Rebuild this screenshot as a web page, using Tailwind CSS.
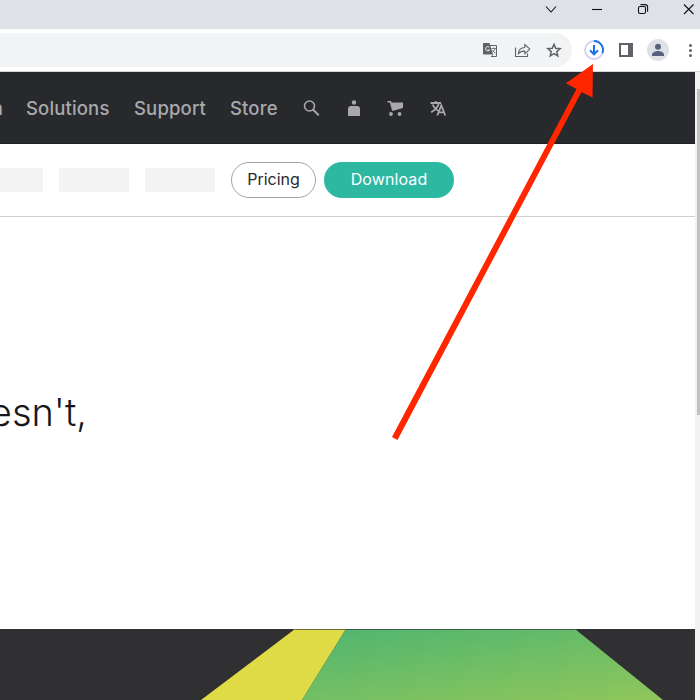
<!DOCTYPE html>
<html lang="en">
<head>
<meta charset="utf-8">
<title>Browser window</title>
<script src="https://cdn.jsdelivr.net/npm/@tailwindcss/browser@4"></script>
</head>
<body class="bg-white">
<div class="relative flex h-[700px] w-[700px] flex-col overflow-hidden bg-white font-['Inter','Liberation_Sans',sans-serif]">
  <!-- Window title bar -->
  <div class="flex h-[29px] shrink-0 justify-end bg-[#dee1e6]">
    <svg class="h-[29px] w-[170px]" viewBox="530 0 170 29" fill="none" stroke="#111" stroke-width="1.1">
      <path d="M546 6.5l5 5.5 5-5.5"/>
      <path d="M592 9.5h10"/>
      <rect x="638.5" y="6.500" width="7" height="7" rx="1.5"/>
      <path d="M640.500 4.600h4.500q2.600 0 2.600 2.600v4.500"/>
      <path d="M684 4.500l9.500 9.500M693.500 4.500l-9.500 9.500"/>
    </svg>
  </div>
  <!-- Toolbar -->
  <div class="flex h-[43px] shrink-0 items-start border-b border-[#d5d6d8] bg-white pt-1">
    <div class="flex h-[34px] w-[572px] justify-end rounded-r-full bg-[#f1f3f4]">
      <svg class="h-[34px] w-[102px]" viewBox="470 33 102 34" fill="none" stroke="#5f6368" stroke-width="1.300">
        <path d="M490 45.500h6.500v11H491" stroke-width="1"/>
        <path d="M483 43h6.500l3.500 11.500h-9q-1 0-1-1z" fill="#5f6368" stroke="none"/>
        <path d="M489.200 47.200a2.100 2.100 0 1 0 .3 2.800h-1.700" stroke="#f1f3f4" stroke-width="1"/>
        <path d="M491.500 48.500h4.500M493.800 47.500v1M495.200 48.500q-.8 2.500-3 4M492.500 50q1 2 3.200 3.300M491.500 56.500l1.500-2" stroke-width=".8"/>
        <path d="M515.500 47.500v9h12v-3" stroke-width="1.100"/>
        <path d="M518.300 53.800q.6-6.200 6.500-6.300v-3.200l5 4.800-5 4.800v-2.800q-4.300-.2-6.500 2.700z" stroke-width="1.100" stroke-linejoin="round"/>
        <path d="M554 44.300l1.700 4 4.400.4-3.300 2.900 1 4.300-3.800-2.300-3.800 2.300 1-4.300-3.300-2.900 4.400-.4z" stroke-width="1.500"/>
      </svg>
    </div>
    <svg class="h-[34px] w-[128px]" viewBox="572 33 128 34" fill="none">
      <circle cx="594" cy="50" r="9" stroke="#d0cff7" stroke-width="1.800"/>
      <path d="M594 41a9 9 0 0 1 8.400 12.200" stroke="#1a73e8" stroke-width="1.900"/>
      <path d="M594 45v9M590 50.300l4 4 4-4" stroke="#1a73e8" stroke-width="2"/>
      <rect x="620" y="44" width="12" height="12" stroke="#5f6368" stroke-width="2"/>
      <path d="M628 43h5v14h-5z" fill="#5f6368"/>
      <circle cx="658" cy="50" r="11" fill="#dee1e6"/>
      <circle cx="658" cy="46.800" r="3" fill="#56627a"/>
      <path d="M652 56v-1.500c0-2.300 3.500-3.500 6-3.500s6 1.200 6 3.500V56z" fill="#56627a"/>
      <g fill="#5f6368"><circle cx="690.500" cy="45.500" r="1.500"/><circle cx="690.500" cy="50.500" r="1.500"/><circle cx="690.500" cy="55.500" r="1.500"/></g>
    </svg>
  </div>
  <!-- Viewport -->
  <div class="flex min-h-0 flex-1">
    <main class="flex w-[695px] flex-col overflow-hidden">
      <nav class="flex h-[72px] shrink-0 items-center border-b border-[#201f25] bg-[#28292d] text-[18.5px] font-medium whitespace-nowrap text-[#a9a9ab]">
        <span class="flex w-[26px] shrink-0 pt-[2px]"><span class="flex w-[3px] justify-end overflow-hidden">n</span></span>
        <a class="w-[108px] pt-[2px] tracking-[0.15px]">Solutions</a>
        <a class="w-[96px] pt-[2px] tracking-[0.15px]">Support</a>
        <a class="w-[66px] pt-[2px] tracking-[0.15px]">Store</a>
        <svg class="h-[24px] w-[154px]" viewBox="296 96 154 24" fill="none" stroke="#a9a9ab">
          <circle cx="309.500" cy="106" r="5" stroke-width="1.600"/><path d="M313.200 109.800l5.600 5.600" stroke-width="2"/>
          <g fill="#a9a9ab" stroke="none">
            <circle cx="354" cy="102.500" r="2.200"/>
            <path d="M348 116v-7q0-3 3-3h6q3 0 3 3v7z"/>
            <path d="M391 102.500h12v5.500l-10.500 3z"/>
            <circle cx="391" cy="114" r="1.900"/><circle cx="399.500" cy="114" r="1.900"/>
          </g>
          <path d="M387.500 101.700h3l2.300 8.600" stroke-width="1.600"/>
          <path d="M430.500 103h10.500M435.700 101v2M439 103q-1.500 5.500-7.800 9.300M432.500 104.500q1.500 3.700 5.500 6.200M437.300 115.500l4-10 4 10M438.700 112.300h5.200" stroke-width="1.800"/>
        </svg>
      </nav>
      <div class="flex h-[73px] shrink-0 items-center border-b border-[#d0d0d0]">
        <div class="h-6 w-[43px] bg-[#f3f3f3]"></div>
        <div class="ml-4 h-6 w-[70px] bg-[#f3f3f3]"></div>
        <div class="ml-4 h-6 w-[70px] bg-[#f3f3f3]"></div>
        <button class="ml-4 flex h-9 w-[85px] items-center justify-center rounded-full border border-[#a3a3a3] pb-[3px] text-[16px] text-[#28292d]">Pricing</button>
        <button class="ml-2 flex h-9 w-[130px] items-center justify-center rounded-full bg-[#2cb8a1] pb-[3px] text-[16px] tracking-[0.1px] text-white">Download</button>
      </div>
      <section class="flex h-[412px] shrink-0 items-center pb-[22px]">
        <div class="flex w-[87px] justify-end text-[38px] leading-[48px] font-light whitespace-nowrap text-[#18181c]">doesn't,</div>
      </section>
      <section class="h-[71px] shrink-0 bg-[#303032]">
        <svg class="h-[71px] w-[695px]" viewBox="0 629 695 71">
          <defs><linearGradient id="green" gradientUnits="userSpaceOnUse" x1="410" y1="610" x2="429" y2="733"><stop stop-color="#4db571"/><stop offset="1" stop-color="#8ec65b"/></linearGradient></defs>
          <path d="M295 629H346L302 700H201z" fill="#dfdb46"/>
          <path d="M346 629H575L663 700H302z" fill="url(#green)"/>
          <path d="M295 629.500H575" stroke="#303032" stroke-opacity=".65"/>
        </svg>
      </section>
    </main>
    <div class="w-[5px] bg-[#f1f1f1] pt-[17px]"><div class="ml-[2px] h-[326px] w-[3px] bg-[#c1c1c1]"></div></div>
  </div>
  <!-- Callout arrow -->
  <svg class="pointer-events-none absolute inset-0 h-[700px] w-[700px]" viewBox="0 0 700 700"><path d="M593 64L566 83.300 576.500 89 392 437 397.500 440 581.500 92 592.500 97.500z" fill="#ff2600"/></svg>
</div>
</body>
</html>
